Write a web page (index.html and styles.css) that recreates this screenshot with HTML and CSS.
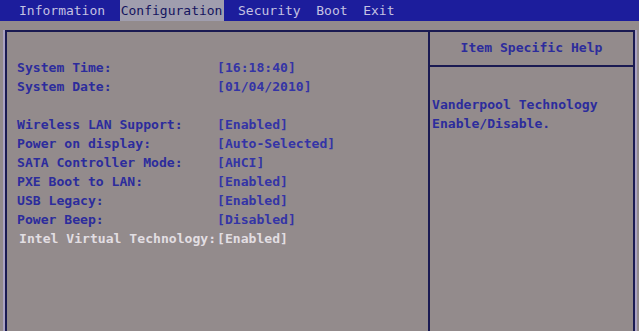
FILE: index.html
```html
<!DOCTYPE html>
<html lang="en">
<head>
  <meta charset="UTF-8" />
  <title>Setup Utility</title>
  <link rel="stylesheet" href="styles.css">
</head>
<body>

  <div class="menu-bar">
    <span class="menu-item">Information</span>
    <span class="menu-item active">Configuration</span>
    <span class="menu-item">Security</span>
    <span class="menu-item">Boot</span>
    <span class="menu-item">Exit</span>
  </div>

  <div class="frame">
    <div class="settings">
      <div class="row"><span class="label">System Time:</span><span class="value">[16:18:40]</span></div>
      <div class="row"><span class="label">System Date:</span><span class="value">[01/04/2010]</span></div>
      <div class="row spacer"></div>
      <div class="row"><span class="label">Wireless LAN Support:</span><span class="value">[Enabled]</span></div>
      <div class="row"><span class="label">Power on display:</span><span class="value">[Auto-Selected]</span></div>
      <div class="row"><span class="label">SATA Controller Mode:</span><span class="value">[AHCI]</span></div>
      <div class="row"><span class="label">PXE Boot to LAN:</span><span class="value">[Enabled]</span></div>
      <div class="row"><span class="label">USB Legacy:</span><span class="value">[Enabled]</span></div>
      <div class="row"><span class="label">Power Beep:</span><span class="value">[Disabled]</span></div>
      <div class="row selected"><span class="label">Intel Virtual Technology:</span><span class="value">[Enabled]</span></div>
    </div>

    <div class="help">
      <div class="help-header">Item Specific Help</div>
      <div class="help-text">
        <div>Vanderpool Technology</div>
        <div>Enable/Disable.</div>
      </div>
    </div>
  </div>

</body>
</html>
```

FILE: styles.css
```css
body {
  margin: 0;
  height: 331px;
  overflow: hidden;
  background: #938b8c;
  color: #2c2c9c;
  font-family: 'DejaVu Sans Mono', 'Liberation Mono', monospace;
  font-size: 13.1px;
  font-weight: bold;
  display: flex;
  flex-direction: column;
}

.menu-bar {
  height: 21px;
  background: #1c1d9c;
  display: flex;
  align-items: center;
  gap: 15.6px;
  padding-left: 19px;
  color: #c4c2e2;
  font-size: 13px;
  font-weight: normal;
}

.menu-item {
  line-height: 21px;
}

.menu-item.active {
  background: #a09eae;
  color: #14145e;
  padding: 0 2px 0 1px;
  margin: 0 -2px 0 -1px;
}

.frame {
  flex: 1;
  margin: 9px 4px 0 5px;
  border: 2px solid #1a1a52;
  border-bottom: none;
  box-shadow: -2px 0 0 #aaa2c2, 2px 0 0 #aaa2c2;
  display: grid;
  grid-template-columns: 421px 1fr;
}

.settings {
  padding: 26px 0 0 10px;
}

.row {
  display: flex;
  height: 19px;
  line-height: 19px;
}

.label {
  width: 200px;
}

.value {
  color: #3434a6;
}

.selected {
  color: #e2dee2;
  padding-left: 2px;
}

.selected .label {
  width: 198px;
}

.selected .value {
  color: #e2dee2;
}

.help {
  border-left: 2px solid #1a1a52;
}

.help-header {
  height: 33px;
  line-height: 32px;
  text-align: center;
  border-bottom: 2px solid #1a1a52;
}

.help-text {
  padding: 28px 0 0 2px;
  line-height: 19px;
}
```
